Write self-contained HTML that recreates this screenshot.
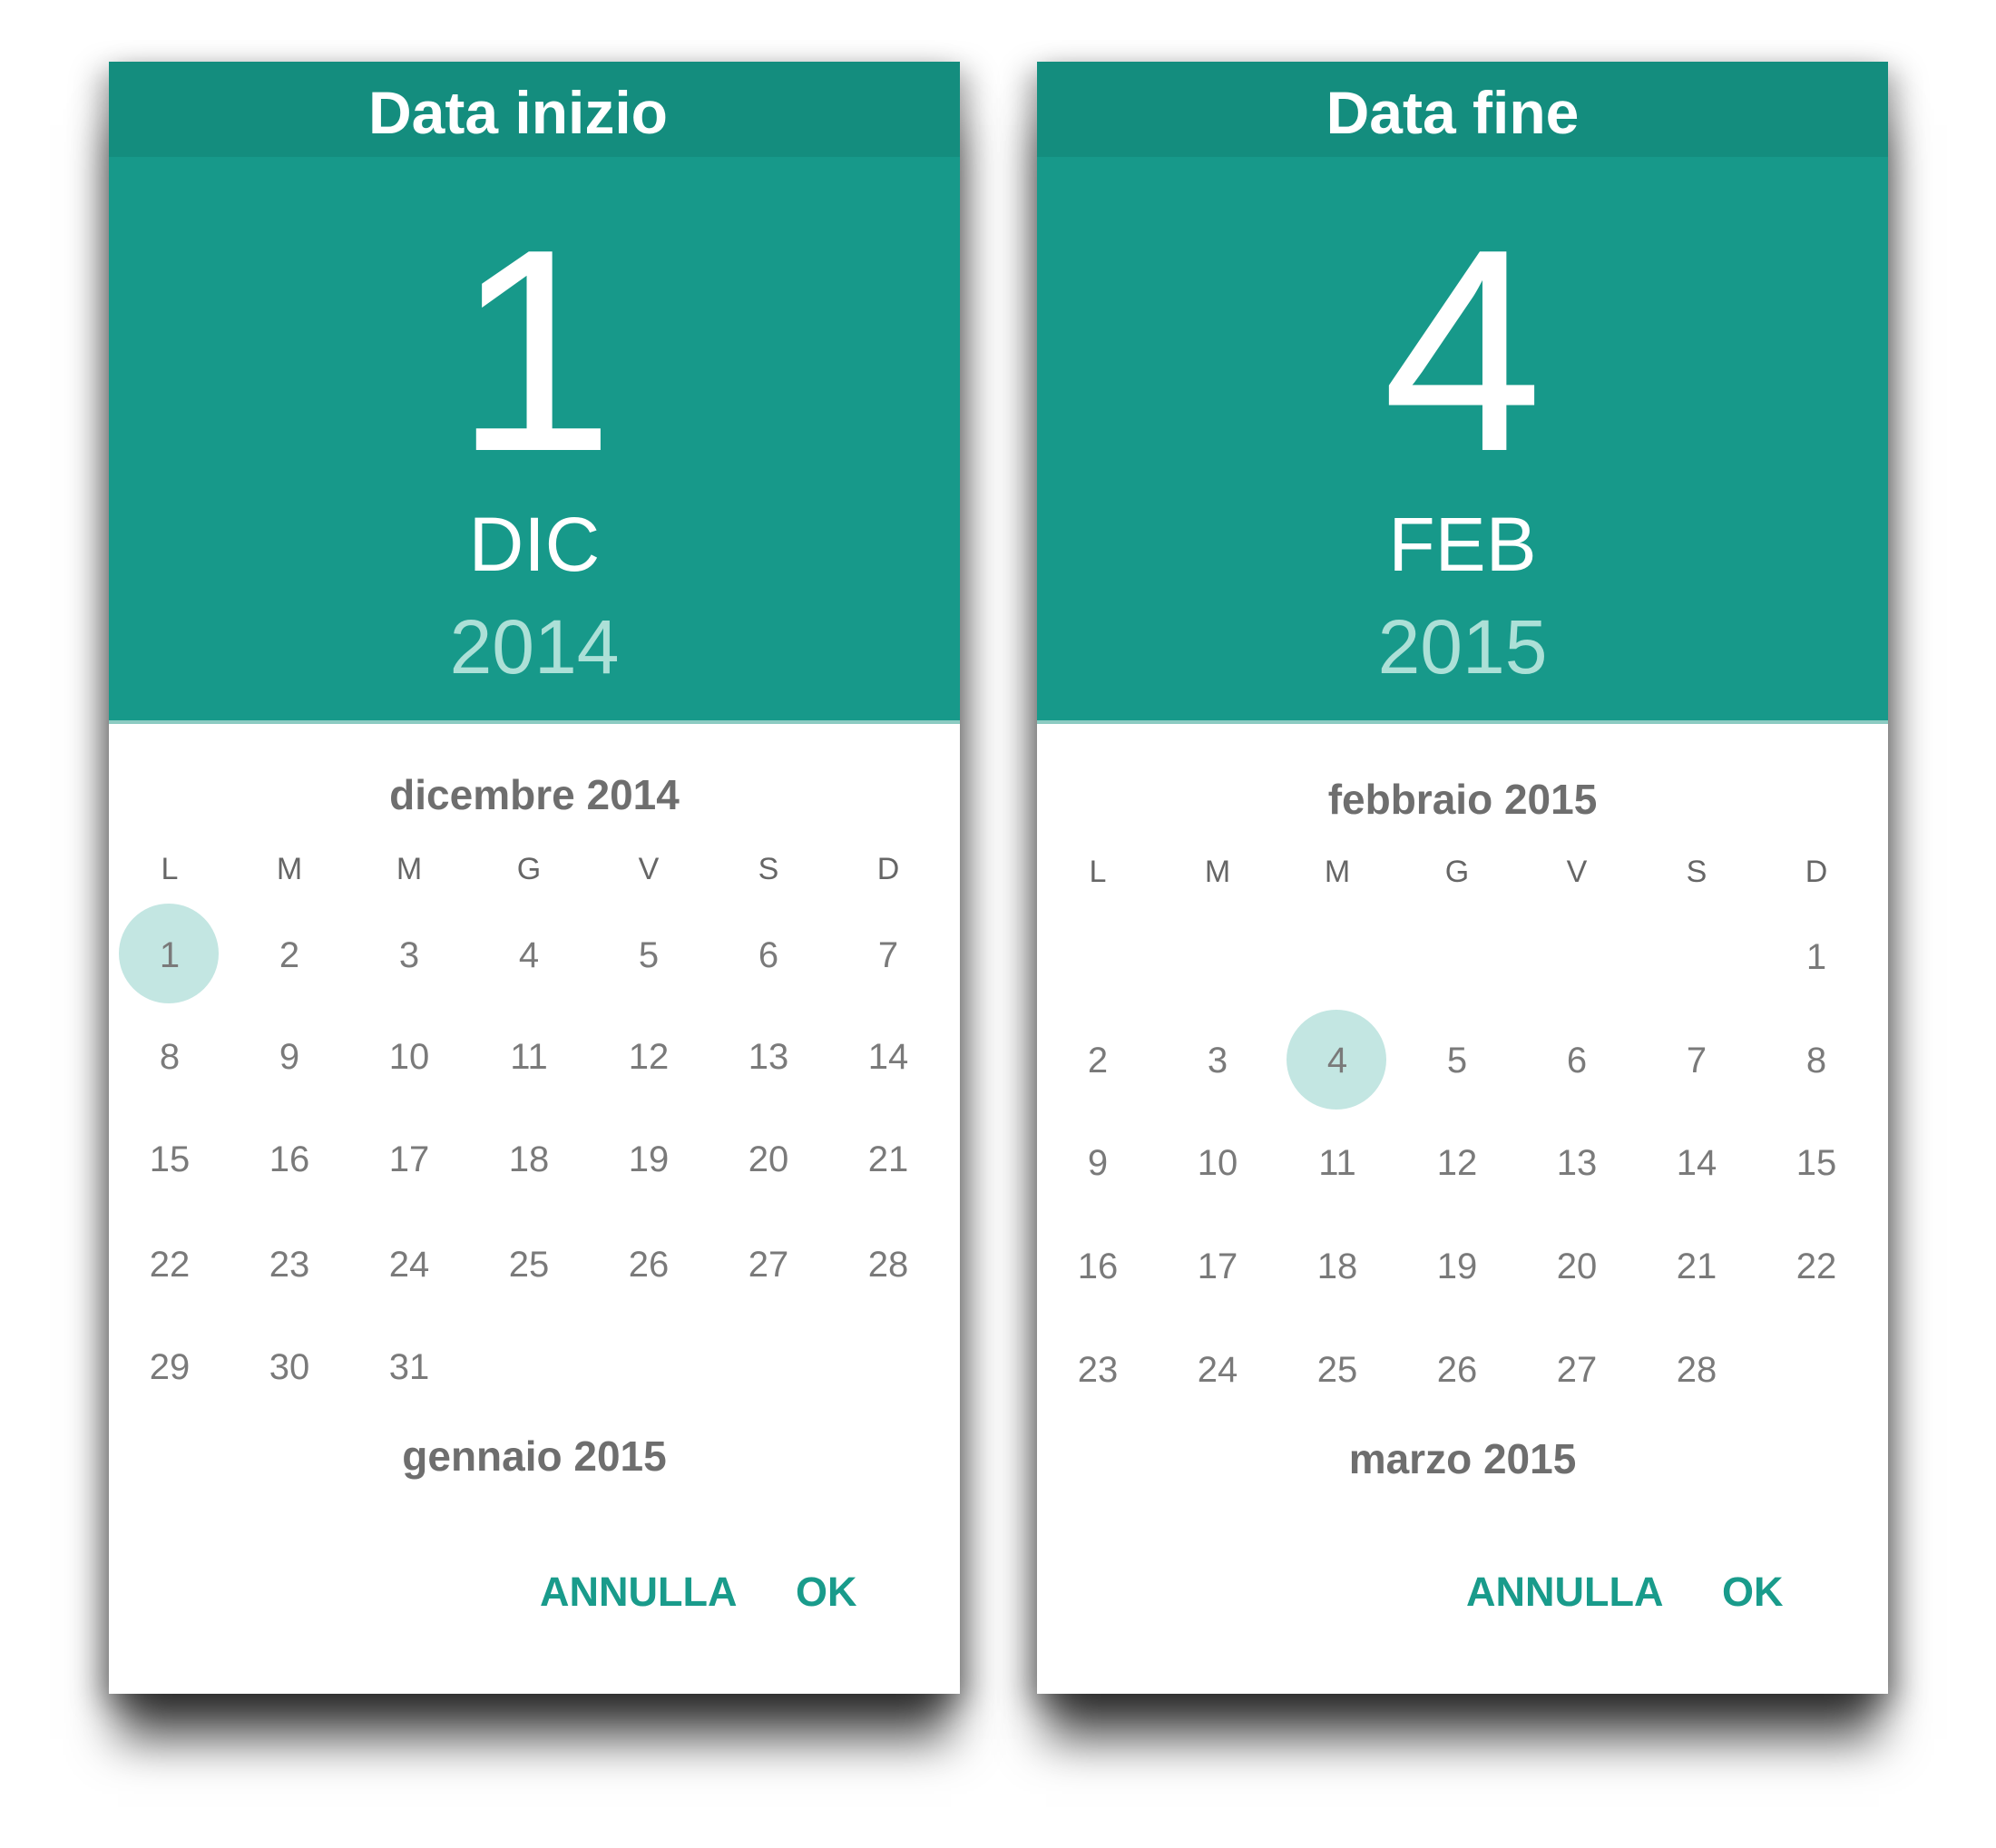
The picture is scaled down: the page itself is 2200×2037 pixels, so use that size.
<!DOCTYPE html>
<html><head><meta charset="utf-8"><style>
body{margin:0;width:2200px;height:2037px;background:#fff;position:relative;overflow:hidden;font-family:"Liberation Sans",Arial,sans-serif}
.p{position:absolute;top:68px;width:938px;height:1799px;background:#fff;box-shadow:0 60px 50px -10px rgba(0,0,0,.7),-12px 10px 30px rgba(0,0,0,.28),12px 10px 30px rgba(0,0,0,.28)}
.tb{position:absolute;left:0;top:0;width:100%;height:105px;background:#148d7e}
.tt{position:absolute;top:4px;width:100%;color:#fff;font-weight:bold;font-size:66px;text-align:center;line-height:105px}
.hd{position:absolute;left:0;top:105px;width:100%;height:621px;background:#17998a;border-bottom:4px solid #8ccbc2}
.c{position:absolute;left:0;width:100%;text-align:center}
.big{font-size:318px;color:#fff;line-height:1}
.mon{font-size:84px;color:#fff;line-height:1}
.yr{font-size:84px;color:#ace0d7;line-height:1}
.mt{font-size:46px;font-weight:bold;color:#6e6e6e;line-height:1}
.cell{position:absolute;width:132px;text-align:center;line-height:1;color:#7a7a7a;font-size:40px}
.dh{font-size:34px;color:#666}
.sel{position:absolute;width:110px;height:110px;border-radius:50%;background:#c3e6e2}
.btn{position:absolute;color:#199b8b;font-weight:bold;font-size:45px;line-height:1}
</style></head><body>

<div class="p" style="left:120px">
<div class="tb"><div class="tt" style="left:-18px">Data inizio</div></div>
<div class="hd">
<div class="c big" style="top:55px">1</div>
<div class="c mon" style="top:385px">DIC</div>
<div class="c yr" style="top:498px">2014</div>
</div>
<div class="c mt" style="top:785px">dicembre 2014</div>
<div class="sel" style="left:11px;top:928px"></div>
<div id="g1"></div>
<div class="c mt" style="top:1514px">gennaio 2015</div>
<div class="btn" style="left:475px;top:1664px">ANNULLA</div>
<div class="btn" style="left:757px;top:1664px">OK</div>
</div>

<div class="p" style="left:1143px">
<div class="tb"><div class="tt" style="left:-11px">Data fine</div></div>
<div class="hd">
<div class="c big" style="top:55px">4</div>
<div class="c mon" style="top:385px">FEB</div>
<div class="c yr" style="top:498px">2015</div>
</div>
<div class="c mt" style="top:790px">febbraio 2015</div>
<div class="sel" style="left:275px;top:1045px"></div>
<div id="g2"></div>
<div class="c mt" style="top:1517px">marzo 2015</div>
<div class="btn" style="left:473px;top:1664px">ANNULLA</div>
<div class="btn" style="left:755px;top:1664px">OK</div>
</div>

<script>
function grid(id,hy,rows,start,days,x0){
  var el=document.getElementById(id),h='';
  var dn=['L','M','M','G','V','S','D'];
  for(var i=0;i<7;i++)h+='<div class="cell dh" style="left:'+(x0+i*132)+'px;top:'+(hy-14)+'px">'+dn[i]+'</div>';
  for(var d=1;d<=days;d++){var k=start+d-1,r=Math.floor(k/7),c=k%7;
    h+='<div class="cell" style="left:'+(x0+c*132)+'px;top:'+(rows[r]-68-25)+'px">'+d+'</div>';}
  el.innerHTML=h;
}
grid('g1',963-68-8,[1058,1170,1283,1399,1512],0,31,1);
grid('g2',966-68-8,[1060,1174,1287,1401,1515],6,28,1);
</script>
</body></html>
